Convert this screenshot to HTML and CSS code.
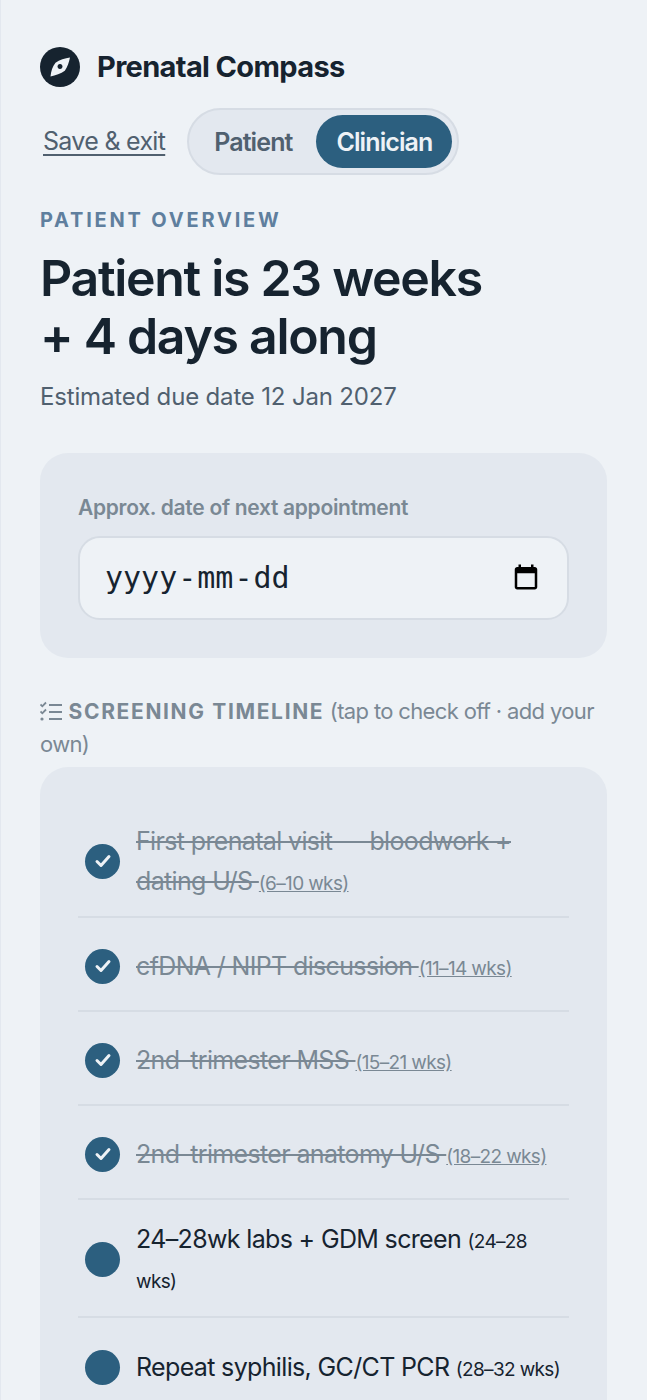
FILE: index.html
```html
<!DOCTYPE html>
<html lang="en">
<head>
  <meta charset="UTF-8" />
  <meta name="viewport" content="width=device-width, initial-scale=1.0"/>
  <title>Prenatal Compass</title>
  <link rel="stylesheet" href="styles.css">
</head>
<body>
  <main class="page">
    <header class="brand">
      <span class="brand-mark">
        <svg viewBox="0 0 40 40" width="40" height="40">
          <path fill="#eef2f6" fill-rule="evenodd" d="M30 10.500 C29 15 27.500 20 24.800 23.800 C21 26.800 15.500 28.500 10.500 29.500 C11 24.500 12.500 19.500 15.500 15.800 C19.500 13 25 11 30 10.500 Z M20 17 a2.500 2.500 0 1 0 0.010 0 Z"/>
        </svg>
      </span>
      <span class="brand-name">Prenatal Compass</span>
    </header>

    <div class="controls">
      <a class="save-link" href="#">Save &amp; exit</a>
      <div class="role-toggle">
        <button class="role-btn">Patient</button>
        <button class="role-btn active">Clinician</button>
      </div>
    </div>

    <p class="eyebrow">PATIENT OVERVIEW</p>
    <h1>Patient is 23 weeks<br>+ 4 days along</h1>
    <p class="due">Estimated due date 12 Jan 2027</p>

    <section class="card appt">
      <label class="field-label">Approx. date of next appointment</label>
      <div class="date-field">
        <span class="date-text">yyyy<i>-</i>mm<i>-</i>dd</span>
        <svg class="cal" viewBox="0 0 24 24" width="30" height="30">
          <path fill="#000" d="M19 4h-1V2h-2v2H8V2H6v2H5C3.900 4 3 4.900 3 6v14c0 1.100.9 2 2 2h14c1.100 0 2-.9 2-2V6c0-1.100-.9-2-2-2zm0 16H5V9h14v11z"/>
        </svg>
      </div>
    </section>

    <h2 class="section-head">
      <svg class="list-icon" viewBox="0 0 22 24" width="22" height="24">
        <path d="M9 5h13M9 12h13M9 19h13" stroke="#7a8894" stroke-width="2.200" fill="none"/>
        <path d="M.5 4.500l1.800 1.800L6 2.500M.5 11.500l1.800 1.800L6 9.500" stroke="#7a8894" stroke-width="1.800" fill="none"/>
        <circle cx="2" cy="19" r="1.600" fill="#7a8894"/>
      </svg>
      <strong>SCREENING TIMELINE</strong> <span>(tap to check off · add your own)</span>
    </h2>

    <section class="card timeline">
      <div class="row done">
        <span class="dot"><svg viewBox="0 0 24 24" width="24" height="24"><path d="M6 12.500l4 4 8-9" stroke="#eef2f6" stroke-width="3" fill="none" stroke-linecap="round" stroke-linejoin="round"/></svg></span>
        <div class="label"><span class="task">First prenatal visit — bloodwork + dating U/S </span><small>(6–10 wks)</small></div>
      </div>
      <div class="row done">
        <span class="dot"><svg viewBox="0 0 24 24" width="24" height="24"><path d="M6 12.500l4 4 8-9" stroke="#eef2f6" stroke-width="3" fill="none" stroke-linecap="round" stroke-linejoin="round"/></svg></span>
        <div class="label"><span class="task">cfDNA / NIPT discussion </span><small>(11–14 wks)</small></div>
      </div>
      <div class="row done">
        <span class="dot"><svg viewBox="0 0 24 24" width="24" height="24"><path d="M6 12.500l4 4 8-9" stroke="#eef2f6" stroke-width="3" fill="none" stroke-linecap="round" stroke-linejoin="round"/></svg></span>
        <div class="label"><span class="task">2nd-trimester MSS </span><small>(15–21 wks)</small></div>
      </div>
      <div class="row done">
        <span class="dot"><svg viewBox="0 0 24 24" width="24" height="24"><path d="M6 12.500l4 4 8-9" stroke="#eef2f6" stroke-width="3" fill="none" stroke-linecap="round" stroke-linejoin="round"/></svg></span>
        <div class="label"><span class="task">2nd-trimester anatomy U/S </span><small>(18–22 wks)</small></div>
      </div>
      <div class="row open-wrap">
        <span class="dot"></span>
        <div class="label"><span class="task">24–28wk labs + GDM screen </span><small>(24–28 wks)</small></div>
      </div>
      <div class="row">
        <span class="dot"></span>
        <div class="label"><span class="task">Repeat syphilis, GC/CT PCR </span><small>(28–32 wks)</small></div>
      </div>
    </section>
  </main>
</body>
</html>
```

FILE: styles.css
```css
html, body {
  margin: 0;
  height: 1400px;
  overflow: hidden;
}

body {
  font-family: Inter, 'Noto Sans', sans-serif;
  background: #eef2f6;
  color: #16232f;
}

.page {
  padding: 47px 40px 0 39px;
  border-left: 1px solid #e3e8ef;
}

.brand {
  display: flex;
  align-items: center;
  gap: 17px;
}

.brand-mark {
  width: 40px;
  height: 40px;
  border-radius: 50%;
  background: #16232f;
  display: flex;
}

.brand-name {
  font-size: 29px;
  font-weight: 700;
  letter-spacing: -0.65px;
  margin-top: -2px;
}

.controls {
  display: flex;
  align-items: center;
  gap: 22px;
  margin-top: 21px;
  margin-left: 3px;
}

.save-link {
  color: #50606f;
  font-size: 25px;
  letter-spacing: -0.7px;
  line-height: 30px;
  margin-top: -2px;
  text-decoration: underline;
  text-underline-offset: 4px;
  text-decoration-thickness: 2px;
}

.role-toggle {
  display: flex;
  gap: 4px;
  padding: 5px;
  border: 2px solid #d6dce4;
  background: #e3e8ef;
  border-radius: 34px;
}

.role-btn {
  border: 0;
  background: none;
  font-family: inherit;
  font-size: 25px;
  font-weight: 600;
  letter-spacing: -0.9px;
  color: #50606f;
  padding: 0 20px;
  height: 53px;
  border-radius: 27px;
}

.role-btn.active {
  background: #2c5f7f;
  color: #eef2f6;
}

.eyebrow {
  margin: 32px 0 0;
  font-size: 20px;
  font-weight: 700;
  letter-spacing: 2.800px;
  color: #5f7f9e;
  line-height: 26px;
}

h1 {
  margin: 16px 0 0;
  font-size: 50px;
  line-height: 58px;
  font-weight: 600;
  letter-spacing: -1.300px;
}

.due {
  margin: 15px 0 0;
  font-size: 24px;
  line-height: 34px;
  letter-spacing: -0.17px;
  color: #50606f;
}

.card {
  background: #e3e8ef;
  border-radius: 28px;
  padding: 41px 38px 38px;
}

.appt {
  margin-top: 39px;
}

.field-label {
  display: block;
  font-size: 21px;
  font-weight: 600;
  line-height: 28px;
  letter-spacing: -0.3px;
  color: #7a8894;
}

.date-field {
  margin-top: 14px;
  height: 84px;
  box-sizing: border-box;
  background: #eef2f6;
  border: 2px solid #d6dce4;
  border-radius: 22px;
  padding: 0 26px 2px 25px;
  display: flex;
  align-items: center;
  justify-content: space-between;
}

.date-text {
  font-family: 'DejaVu Sans Mono', monospace;
  font-size: 30px;
}

.date-text i {
  font-style: normal;
  margin: 0 1px;
}

.section-head {
  margin: 37px 0 0;
  font-size: 22px;
  line-height: 32px;
  font-weight: 400;
  letter-spacing: -0.65px;
  color: #7a8894;
}

.section-head strong {
  font-size: 21px;
  font-weight: 700;
  letter-spacing: 1.650px;
}

.list-icon {
  vertical-align: -5px;
  margin-right: 1px;
}

.timeline {
  margin-top: 7px;
  padding-top: 35px;
  height: 800px;
}

.row {
  display: flex;
  align-items: center;
  gap: 16px;
  padding: 19px 0 15px 7px;
  min-height: 94px;
  box-sizing: border-box;
  border-bottom: 2px solid #d6dce4;
}

.row:last-child {
  border-bottom: 0;
}

.row.open-wrap {
  padding-bottom: 17px;
}

.dot {
  flex: none;
  width: 35px;
  height: 35px;
  border-radius: 50%;
  background: #2c5f7f;
  display: flex;
  align-items: center;
  justify-content: center;
}

.label {
  font-size: 25px;
  line-height: 40px;
  letter-spacing: -0.65px;
  color: #16232f;
}

.label small {
  font-size: 19px;
  line-height: 1;
}

.row.done .label {
  color: #7a8894;
}

.row.done .task {
  text-decoration: line-through;
}

.row.done small {
  text-decoration: underline;
  text-underline-offset: 1px;
}
```
